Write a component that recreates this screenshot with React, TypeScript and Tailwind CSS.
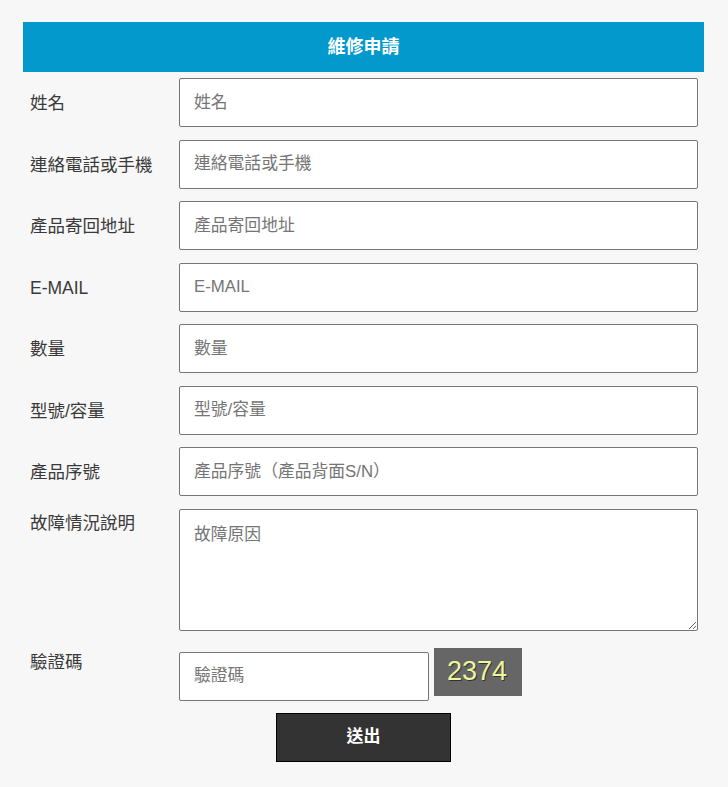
import React from "react";

const font = { fontFamily: '"Liberation Sans", "Noto Sans CJK TC", sans-serif' };

const fields: [string, string][] = [
  ["姓名", "姓名"],
  ["連絡電話或手機", "連絡電話或手機"],
  ["產品寄回地址", "產品寄回地址"],
  ["E-MAIL", "E-MAIL"],
  ["數量", "數量"],
  ["型號/容量", "型號/容量"],
  ["產品序號", "產品序號（產品背面S/N）"],
];

export default function App() {
  return (
    <div className="min-h-[787px] w-full bg-[#f7f7f7] pt-[22px]" style={font}>
      <div className="mx-[23px] w-[681px]">
        <div className="h-[50px] bg-[#0399cc] flex items-center justify-center text-white font-bold text-[18px]">
          維修申請
        </div>
        <div className="flex flex-col gap-[12.5px] pt-[6px]">
          {fields.map(([label, ph]) => (
            <div key={label} className="flex h-[49px]">
              <div className="w-[156px] pl-[7px] flex items-center pt-[2px] text-[17.5px] text-[#3a3a3a]">{label}</div>
              <input
                placeholder={ph}
                className="w-[519px] h-[49px] bg-white border border-[#767676] rounded-[2px] px-[14px] text-[16.8px] text-[#333] placeholder:text-[#757575] outline-none"
              />
            </div>
          ))}
          <div className="flex">
            <div className="w-[156px] pl-[7px] leading-[28px] text-[17.5px] text-[#3a3a3a]">故障情況說明</div>
            <textarea
              placeholder="故障原因"
              className="w-[519px] h-[122px] bg-white border border-[#767676] rounded-[2px] px-[14px] py-[13px] leading-[24px] text-[16.8px] text-[#333] placeholder:text-[#757575] outline-none"
            />
          </div>
        </div>
        <div className="flex mt-[17px]">
          <div className="w-[156px] pl-[7px] leading-[28px] text-[17.5px] text-[#3a3a3a]">驗證碼</div>
          <input
            placeholder="驗證碼"
            className="mt-[4px] w-[250px] h-[49px] bg-white border border-[#767676] rounded-[2px] px-[14px] text-[16.8px] text-[#333] placeholder:text-[#757575] outline-none"
          />
          <div
            className="ml-[5px] w-[88px] h-[48px] bg-[#666666] flex items-center justify-center text-[27px] text-[#eef59a] pr-[2px]"
            style={{ fontFamily: '"Liberation Sans", sans-serif', textShadow: "1px 1px 0 #333" }}
          >
            2374
          </div>
        </div>
        <div className="flex justify-center mt-[12px]">
          <button className="w-[175px] h-[49px] bg-[#333333] border border-black text-white font-bold text-[17px]">
            送出
          </button>
        </div>
      </div>
    </div>
  );
}
